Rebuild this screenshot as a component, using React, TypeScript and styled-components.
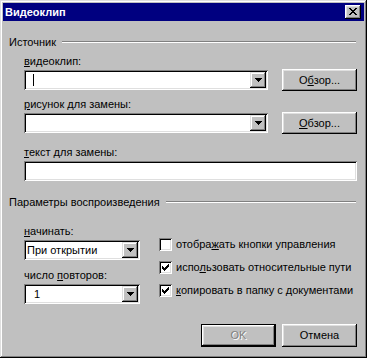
import React from 'react';
import styled, { createGlobalStyle } from 'styled-components';

const Global = createGlobalStyle`
  html, body { margin: 0; padding: 0; background: #c0c0c0; }
  body { font-family: "Liberation Sans", Arial, sans-serif; font-size: 11px; }
`;

const raised = `
  box-shadow: inset -1px -1px #000, inset 1px 1px #fff, inset -2px -2px #808080, inset 2px 2px #dfdfdf;
`;
const sunken = `
  box-shadow: inset 1px 1px #808080, inset -1px -1px #fff, inset 2px 2px #000, inset -2px -2px #dfdfdf;
`;

const Window = styled.div`
  box-sizing: border-box;
  width: 367px;
  height: 358px;
  padding: 3px;
  background: #c0c0c0;
  box-shadow: inset -1px -1px #000, inset 1px 1px #dfdfdf, inset -2px -2px #808080, inset 2px 2px #fff;
  display: flex;
  flex-direction: column;
  color: #000;
  font-family: "Liberation Sans", Arial, sans-serif;
  font-size: 11px;
`;

const TitleBar = styled.div`
  height: 18px;
  background: #000080;
  display: flex;
  align-items: center;
  justify-content: space-between;
  padding: 0 3px 0 2px;
`;

const Title = styled.span`
  color: #fff;
  font-weight: bold;
  font-size: 11px;
  line-height: 13px;
`;

const CloseButton = styled.div`
  width: 16px;
  height: 14px;
  background: #c0c0c0;
  ${raised}
  display: flex;
  align-items: center;
  justify-content: center;
  padding-right: 1px;
  padding-bottom: 1px;
  box-sizing: border-box;
`;

const Body = styled.div`
  flex: 1;
  display: flex;
  flex-direction: column;
  padding: 15px 7px 8px 6px;
`;

const SectionHeader = styled.div<{ $mt?: number }>`
  display: flex;
  align-items: flex-start;
  height: 13px;
  line-height: 13px;
  margin-top: ${p => p.$mt ?? 0}px;
  white-space: nowrap;
  &::after {
    content: '';
    flex: 1;
    margin: 5px 1px 0 6px;
    border-top: 1px solid #808080;
    border-bottom: 1px solid #fff;
  }
`;

const Indent = styled.div`
  margin-left: 15px;
  display: flex;
  flex-direction: column;
`;

const Label = styled.label<{ $mt?: number; $mb?: number }>`
  display: block;
  height: 13px;
  line-height: 13px;
  white-space: nowrap;
  margin-top: ${p => p.$mt ?? 0}px;
  margin-bottom: ${p => p.$mb ?? 2}px;
`;

const Key = styled.u`
  text-decoration: underline;
  text-underline-offset: 1px;
`;

const Row = styled.div`
  display: flex;
  align-items: center;
  gap: 14px;
`;

const ComboBox = styled.div<{ $width?: number }>`
  box-sizing: border-box;
  height: 20px;
  ${p => (p.$width ? `width: ${p.$width}px;` : 'flex: 1;')}
  background: #fff;
  ${sunken}
  padding: 2px;
  display: flex;
  align-items: center;
`;

const ComboText = styled.div<{ $indent?: number }>`
  flex: 1;
  padding-left: ${p => p.$indent ?? 1}px;
  line-height: 13px;
  white-space: nowrap;
  overflow: hidden;
`;

const Caret = styled.div`
  width: 1px;
  height: 12px;
  background: #000;
  margin-left: 6px;
`;

const DropButton = styled.div`
  box-sizing: border-box;
  width: 16px;
  height: 16px;
  background: #c0c0c0;
  box-shadow: inset -1px -1px #000, inset 1px 1px #dfdfdf, inset -2px -2px #808080, inset 2px 2px #fff;
  display: flex;
  align-items: center;
  justify-content: center;
`;

const TextField = styled.div`
  box-sizing: border-box;
  height: 20px;
  background: #fff;
  ${sunken}
`;

const Button = styled.div<{ $default?: boolean; $disabled?: boolean; $height?: number }>`
  box-sizing: border-box;
  width: 75px;
  height: ${p => p.$height ?? 23}px;
  background: #c0c0c0;
  ${raised}
  ${p => (p.$default ? 'border: 1px solid #000;' : '')}
  display: flex;
  align-items: center;
  justify-content: center;
  line-height: 13px;
  white-space: nowrap;
  color: ${p => (p.$disabled ? '#808080' : '#000')};
  text-shadow: ${p => (p.$disabled ? '1px 1px #fff' : 'none')};
`;

const Options = styled.div`
  display: flex;
  margin-left: 15px;
  margin-top: 16px;
`;

const LeftColumn = styled.div`
  display: flex;
  flex-direction: column;
  width: 116px;
`;

const RightColumn = styled.div`
  display: flex;
  flex-direction: column;
  margin-left: 19px;
  margin-top: 8px;
`;

const CheckRow = styled.div`
  display: flex;
  align-items: center;
  height: 23px;
  gap: 4px;
  white-space: nowrap;
`;

const CheckBox = styled.div`
  box-sizing: border-box;
  width: 13px;
  height: 13px;
  background: #fff;
  ${sunken}
  display: flex;
  align-items: center;
  justify-content: center;
`;

const CheckLabel = styled.span`
  line-height: 13px;
`;

const ButtonRow = styled.div`
  margin-top: auto;
  display: flex;
  justify-content: flex-end;
  gap: 6px;
`;

const Arrow = () => (
  <svg width="7" height="4" viewBox="0 0 7 4" shapeRendering="crispEdges">
    <path d="M0 0h7v1H0zM1 1h5v1H1zM2 2h3v1H2zM3 3h1v1H3z" fill="#000" />
  </svg>
);

const CloseGlyph = () => (
  <svg width="8" height="7" viewBox="0 0 8 7" shapeRendering="crispEdges">
    <path
      d="M0 0h2v1H0zM6 0h2v1H6zM1 1h2v1H1zM5 1h2v1H5zM2 2h4v1H2zM3 3h2v1H3zM2 4h4v1H2zM1 5h2v1H1zM5 5h2v1H5zM0 6h2v1H0zM6 6h2v1H6z"
      fill="#000"
    />
  </svg>
);

const Check = () => (
  <svg width="7" height="7" viewBox="0 0 7 7" shapeRendering="crispEdges">
    <path
      d="M6 0h1v1H6zM5 1h2v1H5zM0 2h1v1H0zM4 2h3v1H4zM0 3h2v1H0zM3 3h3v1H3zM0 4h5v1H0zM1 5h3v1H1zM2 6h1v1H2z"
      fill="#000"
    />
  </svg>
);

const Combo: React.FC<{ value?: React.ReactNode; width?: number; indent?: number }> = ({ value, width, indent }) => (
  <ComboBox $width={width}>
    <ComboText $indent={indent}>{value}</ComboText>
    <DropButton>
      <Arrow />
    </DropButton>
  </ComboBox>
);

const Option: React.FC<{ checked?: boolean; children: React.ReactNode }> = ({ checked, children }) => (
  <CheckRow>
    <CheckBox>{checked && <Check />}</CheckBox>
    <CheckLabel>{children}</CheckLabel>
  </CheckRow>
);

export default function App() {
  return (
    <>
      <Global />
      <Window>
        <TitleBar>
          <Title>Видеоклип</Title>
          <CloseButton>
            <CloseGlyph />
          </CloseButton>
        </TitleBar>
        <Body>
          <SectionHeader>Источник</SectionHeader>
          <Indent>
            <Label $mt={6} $mb={1}>
              <Key>в</Key>идеоклип:
            </Label>
            <Row>
              <ComboBox>
                <ComboText>
                  <Caret />
                </ComboText>
                <DropButton>
                  <Arrow />
                </DropButton>
              </ComboBox>
              <Button $height={22}>
                О<Key>б</Key>зор...
              </Button>
            </Row>
            <Label $mt={7} $mb={1}>
              <Key>р</Key>исунок для замены:
            </Label>
            <Row>
              <Combo />
              <Button $height={22}>
                <Key>О</Key>бзор...
              </Button>
            </Row>
            <Label $mt={12}>
              <Key>т</Key>екст для замены:
            </Label>
            <TextField />
          </Indent>
          <SectionHeader $mt={15}>Параметры воспроизведения</SectionHeader>
          <Options>
            <LeftColumn>
              <Label>
                <Key>н</Key>ачинать:
              </Label>
              <Combo width={116} value="При открытии" />
              <Label $mt={9}>
                число <Key>п</Key>овторов:
              </Label>
              <Combo width={116} value="1" indent={8} />
            </LeftColumn>
            <RightColumn>
              <Option>
                отобра<Key>ж</Key>ать кнопки управления
              </Option>
              <Option checked>
                испо<Key>л</Key>ьзовать относительные пути
              </Option>
              <Option checked>
                <Key>к</Key>опировать в папку с документами
              </Option>
            </RightColumn>
          </Options>
          <ButtonRow>
            <Button $default $disabled>
              OK
            </Button>
            <Button>Отмена</Button>
          </ButtonRow>
        </Body>
      </Window>
    </>
  );
}
